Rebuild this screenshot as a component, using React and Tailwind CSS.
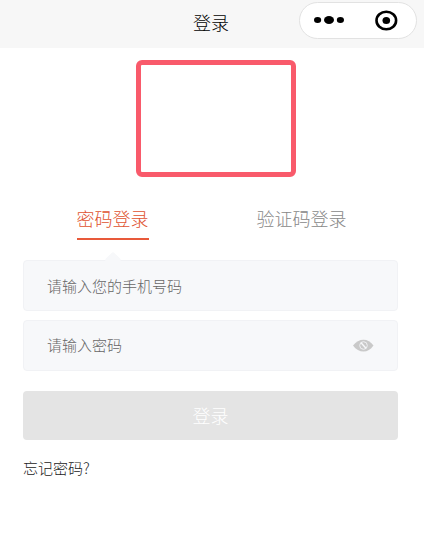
import { useState } from 'react';

function Capsule() {
  return (
    <div className="absolute top-0.5 right-[7px] flex h-[37px] w-[118px] items-center rounded-full border border-[#e2e2e2] bg-white">
      <button type="button" aria-label="更多" className="flex flex-1 justify-center">
        <svg width="32" height="14" viewBox="0 0 32 14">
          <ellipse cx="4.6" cy="6" rx="3.6" ry="3" />
          <ellipse cx="16" cy="6" rx="5" ry="4" />
          <ellipse cx="27.4" cy="6" rx="3.6" ry="3" />
        </svg>
      </button>
      <button type="button" aria-label="关闭" className="flex flex-1 justify-center">
        <svg width="26" height="24" viewBox="0 0 26 24">
          <ellipse cx="12.300" cy="11.500" rx="9.800" ry="8.800" fill="none" stroke="#000" strokeWidth="2.600" />
          <ellipse cx="12.300" cy="11.500" rx="3.800" ry="3.500" />
        </svg>
      </button>
    </div>
  );
}

function EyeIcon() {
  return (
    <svg width="22" height="14" viewBox="0 0 22 14">
      <path d="M1 6.500C4 2.500 7.500.700 11.500.700s7 1.800 10 5.800c-3 4-6 6-10 6S4 10.500 1 6.500Z" fill="#c9c9c9" />
      <circle cx="11.500" cy="6.500" r="3.800" fill="none" stroke="#f0f1f3" strokeWidth="1" />
      <path d="M9 3.800l5 5.400" stroke="#f7f8fa" strokeWidth="1.400" />
    </svg>
  );
}

function Tab({ label, active, onClick }) {
  return (
    <div className="relative flex flex-1 justify-center pb-5">
      <button
        type="button"
        role="tab"
        aria-selected={active}
        onClick={onClick}
        className={
          active
            ? 'border-b-2 border-[#e8593a] pb-1.5 text-lg text-[#e0522f]'
            : 'border-b-2 border-transparent pb-1.5 text-lg text-[#888888]'
        }
      >
        {label}
      </button>
      {active && (
        <span className="absolute -bottom-1.5 size-3 rotate-45 rounded-xs bg-[#f7f8fa]" />
      )}
    </div>
  );
}

function App() {
  const [mode, setMode] = useState('password');
  const [phone, setPhone] = useState('');
  const [secret, setSecret] = useState('');
  const [visible, setVisible] = useState(false);

  const isPassword = mode === 'password';

  return (
    <div className="min-h-screen bg-white font-['Noto_Sans_CJK_SC',sans-serif] font-light">
      <header className="relative flex h-12 items-center justify-center bg-[#f7f7f7] pr-0.5 pb-1">
        <h1 className="text-lg font-light text-black">登录</h1>
        <Capsule />
      </header>

      <main>
        <div className="flex justify-center pt-3 pl-2">
          <div className="h-[117px] w-40 rounded-md border-5 border-[#f95a6b]" />
        </div>

        <div role="tablist" className="flex pt-[27px] pr-7 pl-[18px]">
          <Tab label="密码登录" active={isPassword} onClick={() => setMode('password')} />
          <Tab label="验证码登录" active={!isPassword} onClick={() => setMode('code')} />
        </div>

        <form className="pr-[26px] pl-[23px]" onSubmit={(e) => e.preventDefault()}>
          <input
            type="tel"
            aria-label="手机号码"
            value={phone}
            onChange={(e) => setPhone(e.target.value)}
            placeholder="请输入您的手机号码"
            className="block h-[51px] w-full rounded border border-[#f1f2f5] bg-[#f7f8fa] px-[23px] text-[15px] text-[#333333] outline-none placeholder:text-[#666666]"
          />
          <div className="mt-[9px] flex h-[51px] items-center rounded border border-[#f1f2f5] bg-[#f7f8fa] px-[23px]">
            <input
              type={isPassword && !visible ? 'password' : 'text'}
              aria-label={isPassword ? '密码' : '验证码'}
              value={secret}
              onChange={(e) => setSecret(e.target.value)}
              placeholder={isPassword ? '请输入密码' : '请输入验证码'}
              className="min-w-0 flex-1 bg-transparent text-[15px] text-[#333333] outline-none placeholder:text-[#666666]"
            />
            {isPassword && (
              <button type="button" aria-label="显示密码" onClick={() => setVisible(!visible)}>
                <EyeIcon />
              </button>
            )}
          </div>
          <button
            type="submit"
            className="mt-5 h-[49px] w-full rounded bg-[#e4e4e4] pb-0.5 text-lg text-white"
          >
            登录
          </button>
          <a href="#forgot" className="mt-[17px] inline-block text-[15px] text-[#222222]">
            忘记密码?
          </a>
        </form>
      </main>
    </div>
  );
}

export default App;
